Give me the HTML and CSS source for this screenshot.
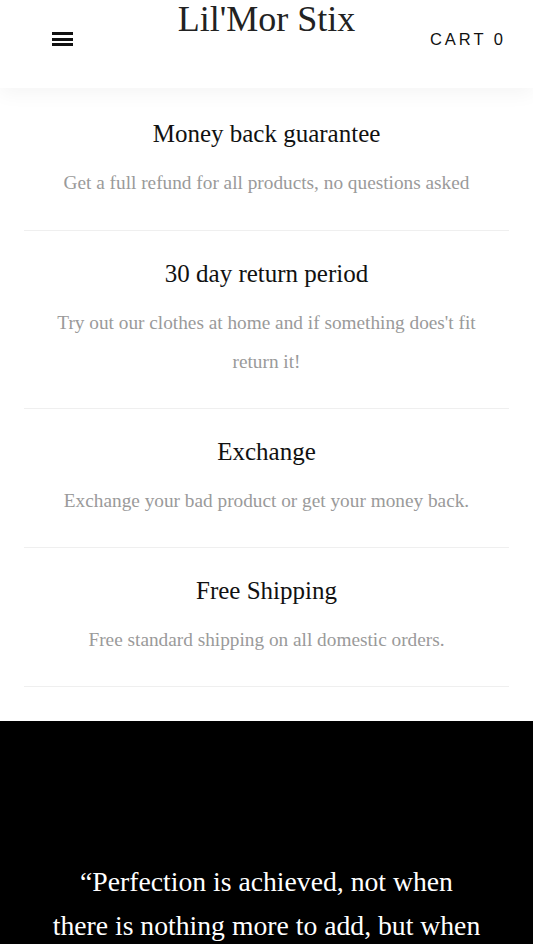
FILE: index.html
```html
<!DOCTYPE html>
<html>
<head>
<meta charset="utf-8">
<link rel="stylesheet" href="styles.css">
</head>
<body>
<header class="site-header">
  <button class="menu-btn" aria-label="Menu">
    <span></span><span></span><span></span>
  </button>
  <div class="logo">Lil'Mor Stix</div>
  <div class="cart">CART <span class="cart-count">0</span></div>
</header>
<main>
  <section class="features">
    <div class="feature">
      <h3 class="feature-title">Money back guarantee</h3>
      <p class="feature-text">Get a full refund for all products, no questions asked</p>
    </div>
    <div class="feature">
      <h3 class="feature-title">30 day return period</h3>
      <p class="feature-text">Try out our clothes at home and if something does't fit return it!</p>
    </div>
    <div class="feature">
      <h3 class="feature-title">Exchange</h3>
      <p class="feature-text">Exchange your bad product or get your money back.</p>
    </div>
    <div class="feature">
      <h3 class="feature-title">Free Shipping</h3>
      <p class="feature-text">Free standard shipping on all domestic orders.</p>
    </div>
  </section>
  <section class="quote">
    <p class="quote-text">“Perfection is achieved, not when there is nothing more to add, but when there is nothing left to take away.”</p>
  </section>
</main>
</body>
</html>
```
FILE: styles.css
```css
html, body {
  margin: 0;
  padding: 0;
  background: #fff;
  font-family: "Liberation Serif", "Times New Roman", serif;
}
.site-header {
  position: relative;
  z-index: 2;
  height: 88px;
  background: #fff;
  box-shadow: 0 6px 18px rgba(0, 0, 0, 0.045);
  display: grid;
  grid-template-columns: 1fr auto 1fr;
  align-items: start;
}
.menu-btn {
  justify-self: start;
  margin: 32px 0 0 52px;
  padding: 0;
  border: 0;
  background: none;
  width: 21px;
  height: 14px;
  display: flex;
  flex-direction: column;
  justify-content: space-between;
}
.menu-btn span {
  display: block;
  height: 3px;
  background: #111;
}
.logo {
  font-size: 36px;
  line-height: 1;
  color: #222;
  padding-top: 1px;
}
.cart {
  justify-self: end;
  margin: 31px 30px 0 0;
  font-family: "Liberation Sans", Arial, sans-serif;
  font-size: 16.5px;
  letter-spacing: 3px;
  color: #111;
  line-height: 1;
}
.cart-count {
  letter-spacing: 0;
}
.features {
  padding: 4px 24px 34px;
}
.feature {
  text-align: center;
  padding: 30px 30px 27px;
  border-bottom: 1px solid #efefef;
}
.feature:first-child {
  padding-top: 29px;
  padding-bottom: 28px;
}
.feature-title {
  margin: 0;
  font-weight: normal;
  font-size: 25px;
  line-height: 26px;
  height: 26px;
  color: #111;
}
.feature-text {
  margin: 16px 0 0;
  font-size: 19.3px;
  line-height: 39px;
  color: #9a9a9a;
}
.quote {
  background: #000;
  color: #fff;
  padding: 139px 49px 60px;
  text-align: center;
}
.quote-text {
  margin: 0;
  font-size: 27.7px;
  line-height: 44px;
}
```
